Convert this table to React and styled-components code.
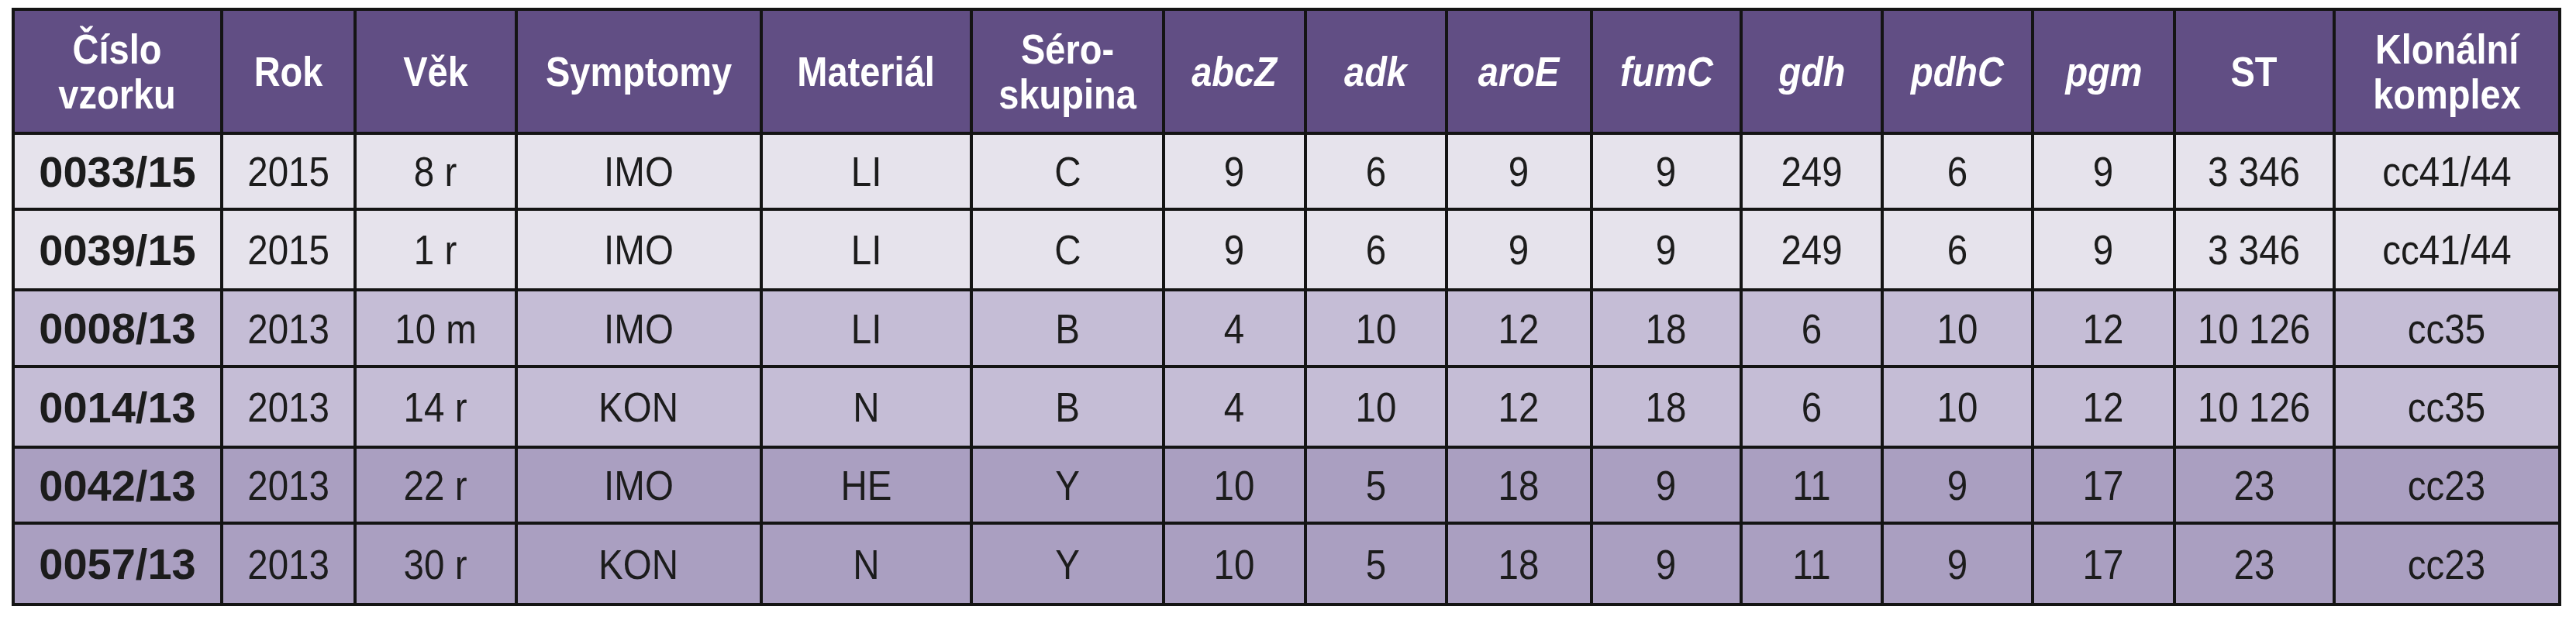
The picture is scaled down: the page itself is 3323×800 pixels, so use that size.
import React from "react";
import styled, { createGlobalStyle } from "styled-components";

const GlobalStyle = createGlobalStyle`
  body {
    margin: 0;
    background: #ffffff;
  }
`;

const columns = [
  { label: ["Číslo", "vzorku"], width: 269 },
  { label: ["Rok"], width: 172 },
  { label: ["Věk"], width: 208 },
  { label: ["Symptomy"], width: 316 },
  { label: ["Materiál"], width: 271 },
  { label: ["Séro-", "skupina"], width: 248 },
  { label: ["abcZ"], width: 183, italic: true },
  { label: ["adk"], width: 182, italic: true },
  { label: ["aroE"], width: 187, italic: true },
  { label: ["fumC"], width: 193, italic: true },
  { label: ["gdh"], width: 182, italic: true },
  { label: ["pdhC"], width: 194, italic: true },
  { label: ["pgm"], width: 183, italic: true },
  { label: ["ST"], width: 206 },
  { label: ["Klonální", "komplex"], width: 291 },
];

const rows = [
  { tone: "light", height: 98, cells: ["0033/15", "2015", "8 r", "IMO", "LI", "C", "9", "6", "9", "9", "249", "6", "9", "3 346", "cc41/44"] },
  { tone: "light", height: 104, cells: ["0039/15", "2015", "1 r", "IMO", "LI", "C", "9", "6", "9", "9", "249", "6", "9", "3 346", "cc41/44"] },
  { tone: "mid", height: 99, cells: ["0008/13", "2013", "10 m", "IMO", "LI", "B", "4", "10", "12", "18", "6", "10", "12", "10 126", "cc35"] },
  { tone: "mid", height: 104, cells: ["0014/13", "2013", "14 r", "KON", "N", "B", "4", "10", "12", "18", "6", "10", "12", "10 126", "cc35"] },
  { tone: "dark", height: 98, cells: ["0042/13", "2013", "22 r", "IMO", "HE", "Y", "10", "5", "18", "9", "11", "9", "17", "23", "cc23"] },
  { tone: "dark", height: 105, cells: ["0057/13", "2013", "30 r", "KON", "N", "Y", "10", "5", "18", "9", "11", "9", "17", "23", "cc23"] },
];

const tones = {
  light: "#e6e3ec",
  mid: "#c5bdd6",
  dark: "#aa9fc1",
};

const Page = styled.div`
  padding: 10px 0 0 15px;
`;

const Table = styled.table`
  border-collapse: collapse;
  table-layout: fixed;
  width: 3289px;
  border: 4px solid #141414;
`;

const HeadRow = styled.tr`
  height: 160px;
  background: #614e84;
`;

const HeadCell = styled.th`
  border: 4px solid #141414;
  padding: 0;
  color: #ffffff;
  font-family: "Liberation Sans", Arial, sans-serif;
  font-weight: 700;
  font-style: ${(p) => (p.italic ? "italic" : "normal")};
  font-size: 54px;
  line-height: 58px;
  text-align: center;
  vertical-align: middle;
`;

const BodyRow = styled.tr`
  height: ${(p) => p.height}px;
  background: ${(p) => tones[p.tone]};
`;

const Cell = styled.td`
  border: 4px solid #141414;
  padding: 0;
  color: #1c1c1c;
  font-family: "Liberation Sans", Arial, sans-serif;
  font-weight: ${(p) => (p.strong ? 700 : 400)};
  font-size: ${(p) => (p.strong ? "56px" : "54px")};
  text-align: center;
  vertical-align: middle;
  white-space: nowrap;
`;

// the source face is a condensed sans; squeeze Liberation Sans to match
const Squeeze = styled.span`
  display: inline-block;
  transform: scaleX(${(p) => p.amount});
  transform-origin: center;
  white-space: nowrap;
`;

const App = () => {
  return (
    <Page>
      <GlobalStyle />
      <Table>
        <colgroup>
          {columns.map((col, i) => (
            <col key={i} style={{ width: col.width }} />
          ))}
        </colgroup>
        <thead>
          <HeadRow>
            {columns.map((col, i) => (
              <HeadCell key={i} italic={col.italic}>
                <Squeeze amount={0.87}>
                  {col.label.map((line, j) => (
                    <React.Fragment key={j}>
                      {j > 0 && <br />}
                      {line}
                    </React.Fragment>
                  ))}
                </Squeeze>
              </HeadCell>
            ))}
          </HeadRow>
        </thead>
        <tbody>
          {rows.map((row, i) => (
            <BodyRow key={i} tone={row.tone} height={row.height}>
              {row.cells.map((value, j) => (
                <Cell key={j} strong={j === 0}>
                  <Squeeze amount={j === 0 ? 1 : 0.88}>{value}</Squeeze>
                </Cell>
              ))}
            </BodyRow>
          ))}
        </tbody>
      </Table>
    </Page>
  );
};

export default App;
